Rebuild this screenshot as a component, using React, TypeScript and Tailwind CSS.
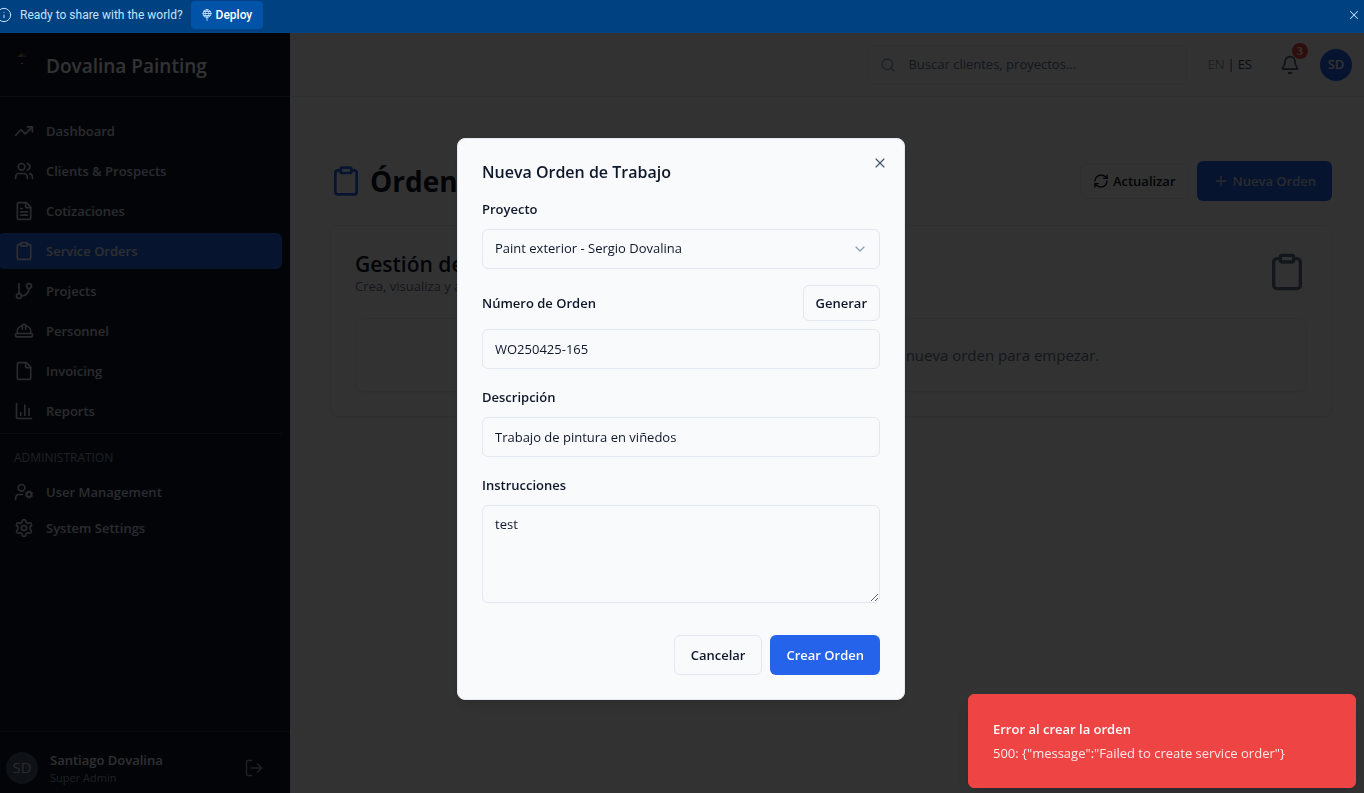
import type { ReactNode } from "react";
import {
  Bell,
  ChevronDown,
  Clipboard,
  File,
  FileText,
  GitBranch,
  HardHat,
  Info,
  LogOut,
  Plus,
  RefreshCw,
  Search,
  Settings,
  TrendingUp,
  UserCog,
  Users,
  X,
} from "lucide-react";

function ReportsIcon() {
  return (
    <svg className="size-5" viewBox="0 0 24 24" fill="none" stroke="currentColor" strokeWidth="2" strokeLinecap="round" strokeLinejoin="round">
      <path d="M3 3v16a2 2 0 0 0 2 2h16" />
      <path d="M18 17V9" />
      <path d="M13 17V5" />
      <path d="M8 17v-3" />
    </svg>
  );
}

function DeployIcon() {
  return (
    <svg className="h-3 w-[10px]" viewBox="0 0 20 24" fill="none" stroke="#c4e2ff" strokeWidth="1.8" strokeLinecap="round">
      <circle cx="10" cy="9" r="8" />
      <path d="M2 9h16M3.500 5h13M3.500 13h13" />
      <path d="M10 1C5 5 5 13 10 17C15 13 15 5 10 1Z" />
      <path d="M10 15v8" />
    </svg>
  );
}

function HouseLogo() {
  return (
    <svg className="h-6 w-[10px]" viewBox="0 0 10 24">
      <path d="M0 4L5 0V4Z" fill="#c8702f" />
      <path d="M5 0L10 4H5Z" fill="#475569" />
      <path d="M4 10h2v1H4Z" fill="#cbd5e1" />
    </svg>
  );
}

function Banner() {
  return (
    <div className="relative z-20 flex h-[33px] items-center bg-[#004182] pr-[3px] pb-[3px] text-[#c4e2ff]">
      <Info className="-ml-1 size-4 shrink-0" strokeWidth={1.5} />
      <p className="ml-2 font-[Roboto,sans-serif] text-[12px]">Ready to share with the world?</p>
      <button className="ml-2 flex h-7 items-center gap-1 rounded bg-[#0053a6] px-[11px] font-[Roboto,sans-serif] text-[12px] font-medium text-white">
        <DeployIcon />
        Deploy
      </button>
      <button aria-label="Close banner" className="ml-auto">
        <X className="size-3.5" strokeWidth={1.75} />
      </button>
    </div>
  );
}

function NavItem({ icon, label, active = false }: { icon: ReactNode; label: string; active?: boolean }) {
  return (
    <a
      href="#"
      className={`flex h-9 items-center gap-3 rounded-md pl-4 text-[13px] font-semibold [&_svg]:size-5 ${
        active ? "bg-[#2563eb] text-slate-200" : "text-slate-300"
      }`}
    >
      {icon}
      <span className="pt-0.5">{label}</span>
    </a>
  );
}

function Sidebar() {
  return (
    <aside className="flex w-[290px] shrink-0 flex-col bg-[#0f172a]">
      <div className="flex h-16 items-center gap-[19px] border-b border-slate-700 pl-[17px]">
        <HouseLogo />
        <span className="pt-1 text-[19px] font-semibold text-slate-50">Dovalina Painting</span>
      </div>
      <nav className="mt-4 mr-2 -ml-0.5 flex flex-col">
        <div className="flex flex-col gap-1 border-b border-slate-700 pb-1">
          <NavItem icon={<TrendingUp />} label="Dashboard" />
          <NavItem icon={<Users />} label="Clients & Prospects" />
          <NavItem icon={<FileText />} label="Cotizaciones" />
          <NavItem icon={<Clipboard />} label="Service Orders" active />
          <NavItem icon={<GitBranch />} label="Projects" />
          <NavItem icon={<HardHat />} label="Personnel" />
          <NavItem icon={<File />} label="Invoicing" />
          <NavItem icon={<ReportsIcon />} label="Reports" />
        </div>
        <h2 className="mt-4 mb-2 pl-4 text-[12px] leading-4 font-medium text-slate-400">ADMINISTRATION</h2>
        <NavItem icon={<UserCog />} label="User Management" />
        <NavItem icon={<Settings />} label="System Settings" />
      </nav>
      <div className="mt-auto flex h-[62px] items-center gap-3 border-t border-slate-700 pt-2.5 pr-[26px] pl-1.5">
        <span className="flex size-8 items-center justify-center rounded-full bg-slate-600 text-[15px] text-slate-300">SD</span>
        <div>
          <p className="text-[13px] leading-5 font-semibold text-slate-200">Santiago Dovalina</p>
          <p className="text-[11px] leading-4 text-slate-400">Super Admin</p>
        </div>
        <button aria-label="Log out" className="ml-auto text-slate-400">
          <LogOut className="size-5" strokeWidth={1.75} />
        </button>
      </div>
    </aside>
  );
}

function Header() {
  return (
    <header className="flex h-16 items-center justify-end border-b border-slate-200 pr-3">
      <label className="flex h-10 w-80 items-center gap-3 rounded-md border border-slate-200 pl-3">
        <Search className="size-4 text-slate-400" strokeWidth={2} />
        <input
          type="search"
          aria-label="Buscar"
          placeholder="Buscar clientes, proyectos..."
          className="min-w-0 flex-1 bg-transparent text-[13px] outline-none placeholder:text-slate-500"
        />
      </label>
      <div className="ml-5 flex items-center gap-[3px] text-[13px] font-medium text-slate-700">
        <button className="text-slate-400">EN</button>
        <span>|</span>
        <button>ES</button>
      </div>
      <button aria-label="Notificaciones" className="relative ml-7 text-slate-600">
        <Bell className="size-5" strokeWidth={2} />
        <span className="absolute -top-3 -right-2 flex size-4 items-center justify-center rounded-full bg-[#ef4444] font-['Liberation_Serif',serif] text-[12px] font-bold text-white">
          3
        </span>
      </button>
      <button className="ml-5 flex size-8 items-center justify-center rounded-full bg-[#2563eb] text-[13px] font-semibold text-slate-50">SD</button>
    </header>
  );
}

function Orders() {
  return (
    <main className="pt-16 pr-8 pl-10">
      <div className="flex h-10 items-center">
        <Clipboard className="size-8 text-[#2563eb]" />
        <h1 className="ml-2 text-[28px] font-bold text-slate-900">Órdenes de Trabajo</h1>
        <button className="ml-auto flex h-9 items-center gap-1 rounded-md border border-slate-200 px-3 text-[13px] font-semibold text-slate-900">
          <RefreshCw className="size-4" />
          <span className="pt-0.5">Actualizar</span>
        </button>
        <button className="ml-2 flex h-10 items-center gap-1 rounded-md bg-[#2563eb] px-4 text-[13px] font-semibold text-slate-300">
          <Plus className="size-4" />
          <span className="pt-0.5">Nueva Orden</span>
        </button>
      </div>
      <section className="mt-6 rounded-lg border border-slate-200 p-6 shadow-xs">
        <div className="flex items-center justify-between">
          <div>
            <h2 className="text-[21px] leading-7 font-semibold text-slate-900">Gestión de Órdenes</h2>
            <p className="text-[13px] leading-4 text-slate-500">Crea, visualiza y administra las órdenes de trabajo</p>
          </div>
          <Clipboard className="size-10 text-slate-500" />
        </div>
        <p className="mt-6 rounded-lg border border-slate-200 py-6 text-center text-[15px] leading-6 text-slate-500 shadow-xs">
          No hay órdenes de trabajo registradas. Crea una nueva orden para empezar.
        </p>
      </section>
    </main>
  );
}

const labelClass = "text-[13px] leading-6 font-semibold";
const fieldClass = "h-10 w-full rounded-md border border-slate-200 bg-slate-50 px-3 text-[13px] outline-none";

function OrderDialog() {
  return (
    <div role="dialog" aria-labelledby="dialog-title" className="relative w-full max-w-md rounded-lg border border-slate-200 bg-slate-50 p-6 text-slate-900 shadow-lg">
      <button aria-label="Cerrar" className="absolute top-4 right-4 text-slate-600">
        <X className="size-4" strokeWidth={1.75} />
      </button>
      <h2 id="dialog-title" className="text-[16px] leading-[18px] font-semibold">
        Nueva Orden de Trabajo
      </h2>
      <form className="mt-4 flex flex-col gap-4" onSubmit={(e) => e.preventDefault()}>
        <div className="flex flex-col gap-2">
          <label htmlFor="project" className={labelClass}>Proyecto</label>
          <div className="relative">
            <select id="project" className={`${fieldClass} appearance-none`}>
              <option>Paint exterior - Sergio Dovalina</option>
            </select>
            <ChevronDown className="pointer-events-none absolute top-3 right-3 size-4 text-slate-400" />
          </div>
        </div>
        <div className="flex flex-col gap-2">
          <div className="flex items-center justify-between">
            <label htmlFor="number" className={labelClass}>Número de Orden</label>
            <button type="button" className="h-9 rounded-md border border-slate-200 px-3 pt-0.5 text-[13px] font-semibold">Generar</button>
          </div>
          <input id="number" defaultValue="WO250425-165" className={fieldClass} />
        </div>
        <div className="flex flex-col gap-2">
          <label htmlFor="description" className={labelClass}>Descripción</label>
          <input id="description" defaultValue="Trabajo de pintura en viñedos" className={fieldClass} />
        </div>
        <div className="flex flex-col gap-2">
          <label htmlFor="instructions" className={labelClass}>Instrucciones</label>
          <textarea
            id="instructions"
            defaultValue="test"
            className="h-[98px] w-full resize-y rounded-md border border-slate-200 bg-slate-50 px-3 py-2 text-[13px] leading-5 outline-none"
          />
        </div>
        <div className="mt-4 flex justify-end gap-2">
          <button type="button" className="h-10 rounded-md border border-slate-200 px-4 pt-0.5 text-[13px] font-semibold">Cancelar</button>
          <button type="submit" className="h-10 rounded-md bg-[#2563eb] px-4 pt-0.5 text-[13px] font-semibold text-slate-50">Crear Orden</button>
        </div>
      </form>
    </div>
  );
}

export default function App() {
  return (
    <div className="flex h-screen flex-col overflow-hidden bg-slate-50 font-['Open_Sans','Noto_Sans',sans-serif]">
      <Banner />
      <div className="flex min-h-0 flex-1">
        <Sidebar />
        <div className="min-w-0 flex-1">
          <Header />
          <Orders />
        </div>
      </div>
      <div className="fixed inset-x-0 top-[33px] -bottom-3 z-10 flex items-center justify-center bg-black/80 pr-0.5">
        <OrderDialog />
      </div>
      <div role="alert" className="fixed right-2 bottom-[5px] z-30 w-[388px] rounded-md border border-[#ef4444] bg-[#ef4444] p-6 text-[13px] text-slate-50 shadow-lg">
        <p className="leading-5 font-semibold">Error al crear la orden</p>
        <p className="mt-1 leading-5 opacity-90">500: {"{\"message\":\"Failed to create service order\"}"}</p>
      </div>
    </div>
  );
}
